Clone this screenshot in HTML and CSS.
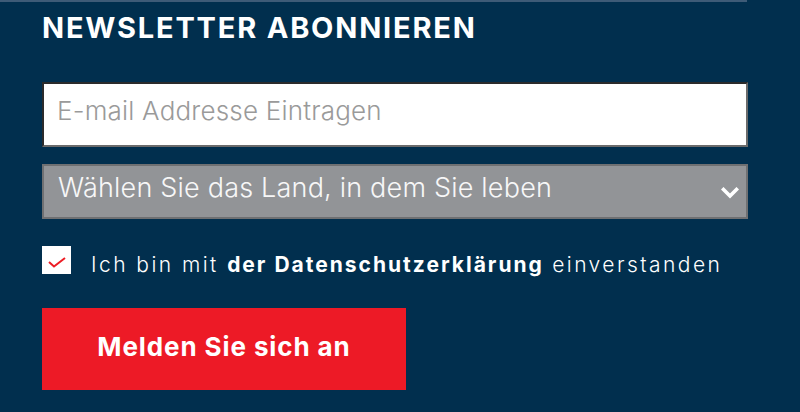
FILE: index.html
```html
<!DOCTYPE html>
<html lang="de">
<head>
<meta charset="utf-8">
<title>Newsletter</title>
<link rel="stylesheet" href="styles.css">
</head>
<body>
<div class="topline"></div>
<section class="newsletter">
  <h2 class="title">NEWSLETTER ABONNIEREN</h2>
  <form class="form">
    <input class="email" type="text" placeholder="E-mail Addresse Eintragen">
    <div class="select-wrap">
      <select class="country">
        <option>Wählen Sie das Land, in dem Sie leben</option>
      </select>
      <svg class="chevron" width="18" height="12" viewBox="0 0 18 12"><path d="M2.5 2.5 L9 9 L15.5 2.5" fill="none" stroke="#fff" stroke-width="3.6" stroke-linecap="square"/></svg>
    </div>
    <label class="consent">
      <span class="box"><svg class="tick" width="18" height="11" viewBox="0 0 18 11"><path d="M1 5 L6 9.5 L17 1" fill="none" stroke="#ed1c24" stroke-width="2"/></svg></span>
      <span class="consent-text">Ich bin mit <b>der Datenschutzerklärung</b> einverstanden</span>
    </label>
    <button class="submit" type="button">Melden Sie sich an</button>
  </form>
</section>
</body>
</html>
```
FILE: styles.css
```css
html, body {
  margin: 0;
  padding: 0;
  background: #012f4e;
  height: 100%;
  overflow: hidden;
}
.topline {
  width: 747px;
  height: 2px;
  background: #3e5b77;
}
.newsletter {
  padding: 0 52px 0 42px;
  width: 706px;
  font-family: "Inter", "Lato", sans-serif;
}
.title {
  margin: 8px 0 0 0;
  font-family: "Inter", sans-serif;
  font-weight: 700;
  font-size: 29px;
  line-height: 36px;
  letter-spacing: 1.8px;
  color: #fff;
}
.form {
  display: flex;
  flex-direction: column;
  margin-top: 36px;
}
.email {
  box-sizing: border-box;
  width: 706px;
  height: 65px;
  margin: 0;
  padding: 0 13px 8px 13px;
  border: 2px solid;
  border-color: #2b2b2b #6b6b6b #6b6b6b #2b2b2b;
  background: #fff;
  font-family: "Inter", sans-serif;
  font-weight: 300;
  font-size: 26px;
  letter-spacing: 0.2px;
  color: #333;
  outline: none;
}
.email::placeholder {
  color: #9a9a9a;
}
.select-wrap {
  position: relative;
  margin-top: 17px;
  width: 706px;
}
.country {
  -webkit-appearance: none;
  appearance: none;
  box-sizing: border-box;
  width: 706px;
  height: 55px;
  margin: 0;
  padding: 0 40px 8px 14px;
  border: 2px solid #6f7072;
  border-radius: 0;
  background: #929497;
  color: #f7f7f7;
  font-family: "Inter", sans-serif;
  font-weight: 300;
  font-size: 27px;
  letter-spacing: 0.2px;
  outline: none;
}
.chevron {
  position: absolute;
  right: 9px;
  top: 23px;
}
.consent {
  display: flex;
  align-items: center;
  margin-top: 27px;
  height: 28px;
  color: #fff;
}
.box {
  width: 29px;
  height: 28px;
  background: #fff;
  display: flex;
  align-items: center;
  justify-content: center;
  flex: none;
}
.tick {
  margin-top: 4px;
}
.consent-text {
  margin-left: 20px;
  padding-top: 8px;
  font-size: 21px;
  font-weight: 300;
  letter-spacing: 2.45px;
  white-space: nowrap;
}
.consent-text b {
  font-weight: 700;
  letter-spacing: 2px;
}
.submit {
  margin-top: 34px;
  width: 364px;
  height: 82px;
  border: none;
  background: #ed1a26;
  color: #fff;
  font-family: "Inter", sans-serif;
  font-weight: 700;
  font-size: 26px;
  letter-spacing: 0.9px;
  padding: 0 0 5px 0;
  cursor: pointer;
}
```
